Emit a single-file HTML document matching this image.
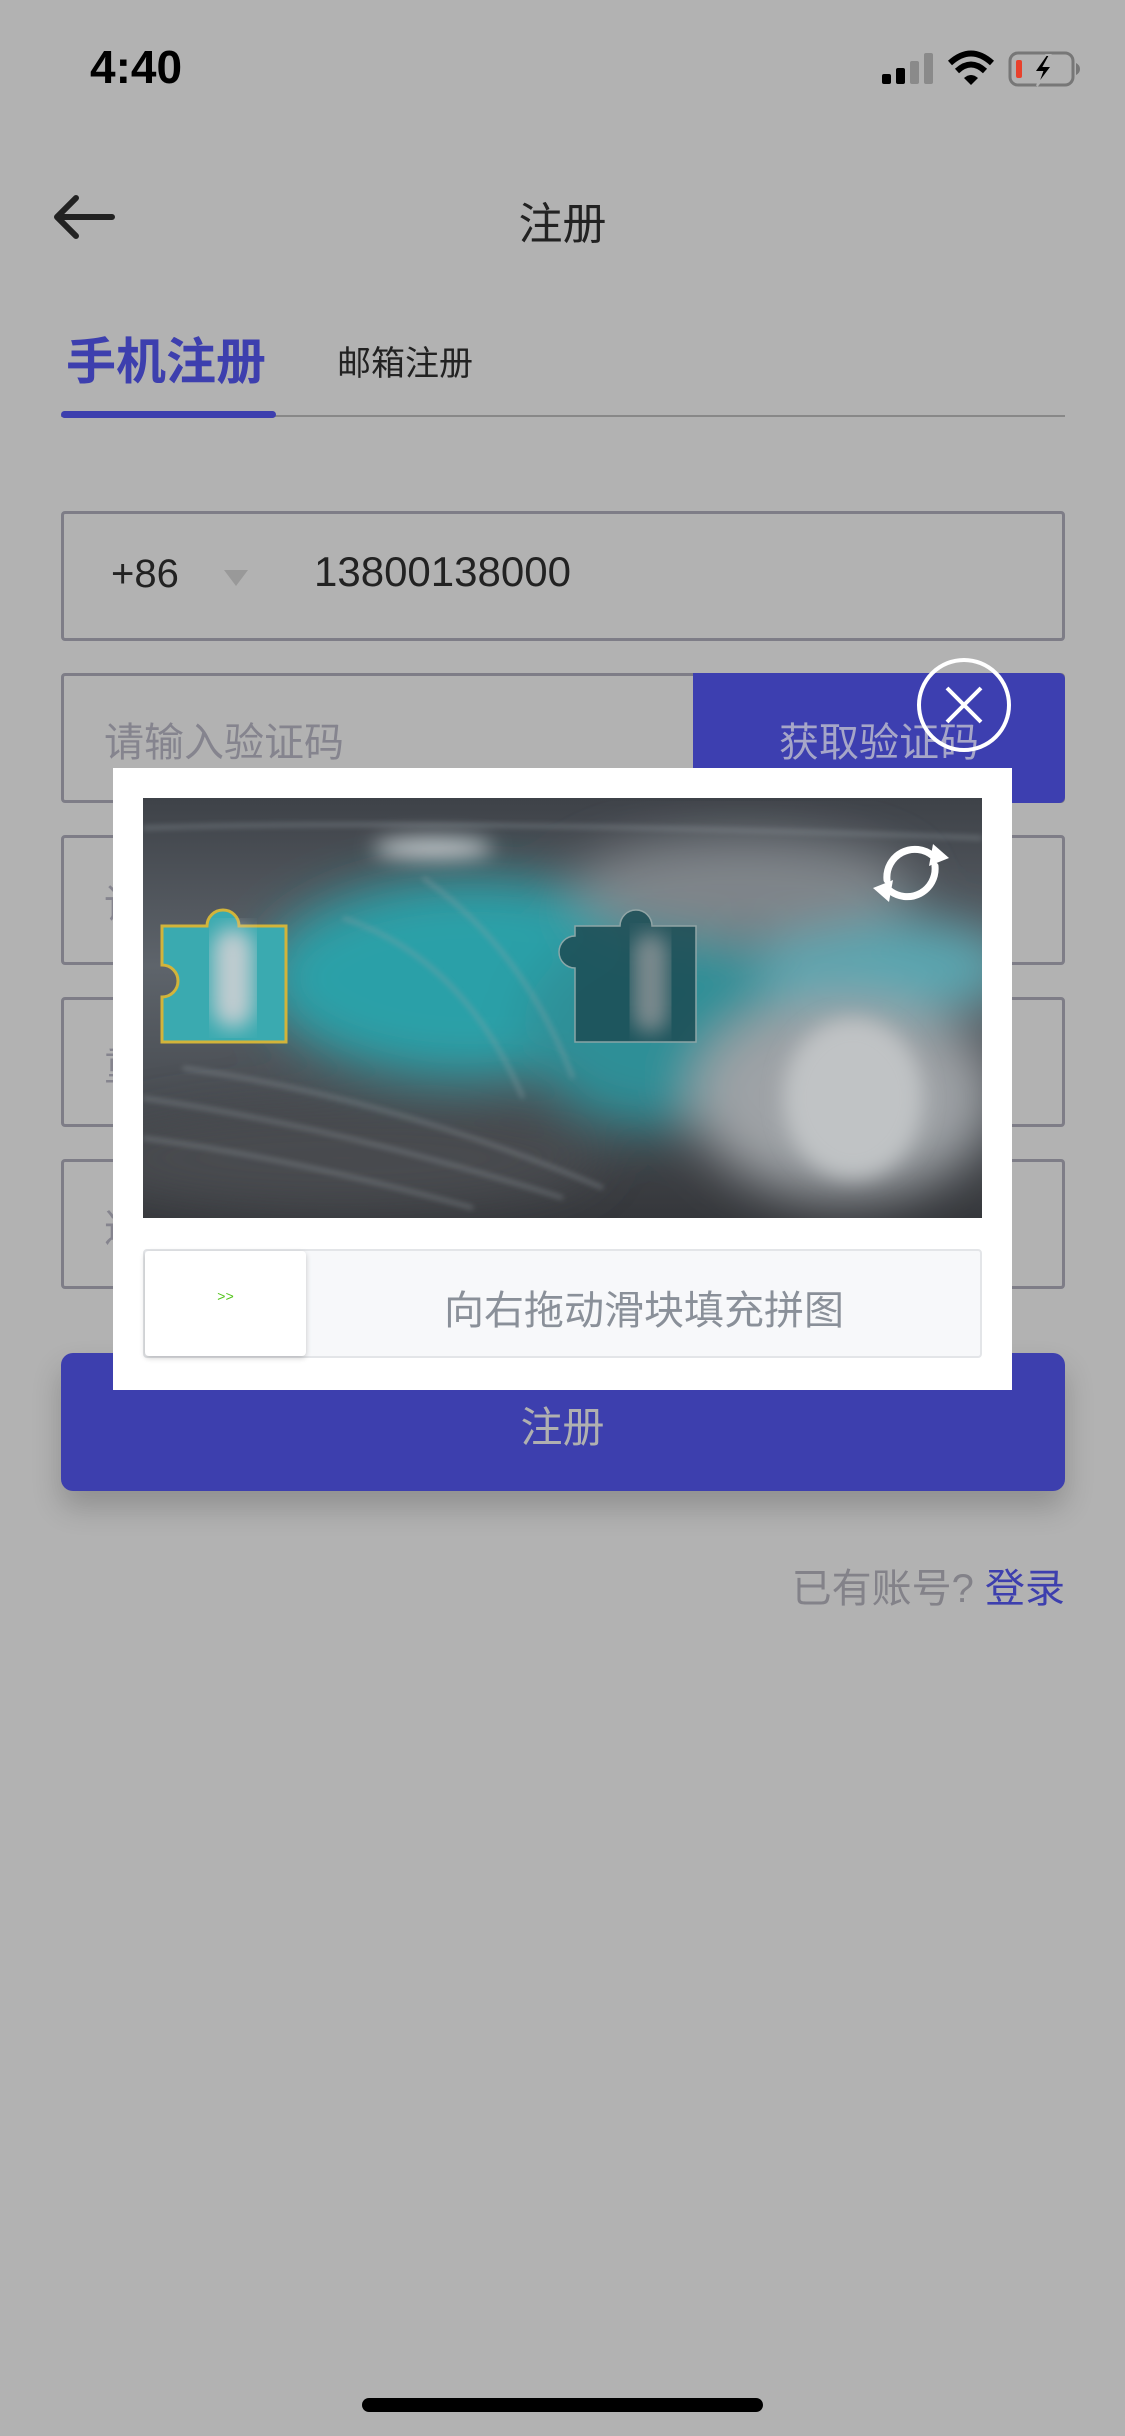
<!DOCTYPE html>
<html><head><meta charset="utf-8">
<style>
*{margin:0;padding:0;box-sizing:border-box}
body{width:1125px;height:2436px;background:#b2b2b2;position:relative;overflow:hidden;font-family:"Liberation Sans","Noto Sans CJK SC",sans-serif}
.abs{position:absolute}
.inp{position:absolute;left:61px;width:1004px;height:130px;border:3px solid #7e7d87;border-radius:4px}
.ph{position:absolute;left:40px;top:34px;font-size:40px;color:#85848e;white-space:nowrap}
</style></head><body>
<div class="abs" style="left:90px;top:40px;font-size:46px;font-weight:600;color:#000">4:40</div>
<svg class="abs" style="left:880px;top:50px" width="200" height="40" viewBox="880 50 200 40">
<rect x="882" y="74" width="9" height="10" rx="2" fill="#000"/>
<rect x="896" y="68" width="9" height="16" rx="2" fill="#000"/>
<rect x="910" y="61" width="9" height="23" rx="2" fill="#8a8a8a"/>
<rect x="924" y="53" width="9" height="31" rx="2" fill="#8a8a8a"/>
<path d="M950 63 Q971 44 992 63" stroke="#000" stroke-width="6" fill="none"/>
<path d="M957 71 Q971 58 985 71" stroke="#000" stroke-width="6" fill="none"/>
<path d="M964 78 L971 85 L978 78 Q971 72 964 78Z" fill="#000"/>
<rect x="1010" y="53" width="63" height="32" rx="8" stroke="#777" stroke-width="3" fill="none"/>
<rect x="1016" y="60" width="6" height="18" rx="2" fill="#e8412c"/>
<path d="M1076 63 v12 q4 -2 4 -6 q0 -4 -4 -6z" fill="#777"/>
<path d="M1046 55 L1034 72 H1042 L1037 86 L1052 66 H1044 L1050 55Z" fill="#000" stroke="#b2b2b2" stroke-width="2"/>
</svg>
<svg class="abs" style="left:50px;top:190px" width="70" height="60"><path d="M62 27 H8 M26 8 L7 27 L26 46" stroke="#222" stroke-width="6" fill="none" stroke-linecap="round" stroke-linejoin="round"/></svg>
<div class="abs" style="left:0;width:1125px;text-align:center;top:188px;font-size:44px;color:#222">注册</div>
<div class="abs" style="left:66px;top:322px;font-size:50px;font-weight:bold;color:#3d3fae">手机注册</div>
<div class="abs" style="left:337px;top:336px;font-size:34px;color:#222">邮箱注册</div>
<div class="abs" style="left:61px;top:415px;width:1004px;height:2px;background:#888"></div>
<div class="abs" style="left:61px;top:411px;width:215px;height:7px;border-radius:4px;background:#3d3fae"></div>

<div class="inp" style="top:511px">
<div class="abs" style="left:47px;top:38px;font-size:40px;color:#222">+86</div>
<div class="abs" style="left:160px;top:56px;width:0;height:0;border-left:12px solid transparent;border-right:12px solid transparent;border-top:16px solid #999"></div>
<div class="abs" style="left:250px;top:34px;font-size:42px;color:#222">13800138000</div>
</div>
<div class="inp" style="top:673px"><div class="ph">请输入验证码</div></div>
<div class="abs" style="left:693px;top:673px;width:372px;height:130px;background:#3d3fb0;border-radius:0 6px 6px 0"></div>
<div class="abs" style="left:693px;top:710px;width:372px;text-align:center;font-size:40px;color:#a6a6c8">获取验证码</div>
<div class="inp" style="top:835px"><div class="ph">请</div></div>
<div class="inp" style="top:997px"><div class="ph">重</div></div>
<div class="inp" style="top:1159px"><div class="ph">邀</div></div>
<div class="abs" style="left:61px;top:1353px;width:1004px;height:138px;background:#3d3fae;border-radius:12px;box-shadow:0 16px 30px rgba(0,0,0,0.2)"></div>
<div class="abs" style="left:0;width:1125px;text-align:center;top:1394px;font-size:42px;color:#b0b0b0">注册</div>
<div class="abs" style="right:60px;top:1556px;font-size:40px;color:#838289">已有账号? <span style="color:#3d3fae">登录</span></div>

<div class="abs" style="left:113px;top:768px;width:899px;height:622px;background:#fff"></div>
<svg class="abs" style="left:143px;top:798px" width="839" height="420" viewBox="0 0 839 420">
<defs>
<filter id="b"><feGaussianBlur stdDeviation="25"/></filter>
<filter id="b2"><feGaussianBlur stdDeviation="10"/></filter>
<filter id="b3"><feGaussianBlur stdDeviation="3"/></filter>
<linearGradient id="bg" x1="0" y1="0" x2="0" y2="1"><stop offset="0" stop-color="#3e4248"/><stop offset="0.4" stop-color="#5e646b"/><stop offset="1" stop-color="#35373b"/></linearGradient>
</defs>
<rect width="839" height="420" fill="url(#bg)"/>
<g filter="url(#b)">
<ellipse cx="330" cy="180" rx="210" ry="100" fill="#2aa0a8"/>
<ellipse cx="520" cy="230" rx="140" ry="100" fill="#2f8f97"/>
<ellipse cx="740" cy="170" rx="130" ry="50" fill="#5aa6b0"/>
<ellipse cx="700" cy="300" rx="150" ry="100" fill="#9ea2a6"/>
<ellipse cx="600" cy="90" rx="170" ry="50" fill="#80858a"/>
<ellipse cx="200" cy="360" rx="260" ry="50" fill="#4a4c50"/>
</g>
<g filter="url(#b3)" stroke="#9aa3a8" stroke-width="3" opacity="0.5" fill="none">
<path d="M0 300 Q200 330 420 400"/><path d="M0 340 Q150 360 330 410"/><path d="M40 270 Q250 300 460 390"/>
<path d="M200 120 Q320 160 380 300"/><path d="M280 80 Q380 150 430 280"/><path d="M0 30 Q300 20 839 40"/>
</g>
<g filter="url(#b2)">
<ellipse cx="290" cy="50" rx="60" ry="10" fill="#c8cdd0"/>
<ellipse cx="710" cy="300" rx="70" ry="80" fill="#c0c3c5"/>
</g>
<path d="M19,128 h45 a16,16 0 1 1 32,0 h47 v116 h-124 v-45 a16,16 0 0 0 0,-32 z" fill="#3aaab0" stroke="#d2b43a" stroke-width="3"/>
<rect x="70" y="130" width="40" height="100" rx="20" fill="#c0ccd0" filter="url(#b2)"/>
<path d="M432,170 a16,16 0 0 1 0,-32 v-10 h45 a16,16 0 1 1 32,0 h44 v116 h-121 z" fill="#1c4d55" opacity="0.85" stroke="#9aa" stroke-width="1.5"/>
<rect x="490" y="135" width="35" height="100" rx="18" fill="#7c8a8e" filter="url(#b2)"/>
<g stroke="#fff" stroke-width="7" fill="none" stroke-linecap="round">
<path d="M744 82 A28 28 0 0 1 790 58"/><path d="M792 68 A28 28 0 0 1 746 92"/>
</g>
<path d="M790 46 L806 60 L786 68Z" fill="#fff"/><path d="M746 104 L730 90 L750 82Z" fill="#fff"/>
</svg>
<div class="abs" style="left:143px;top:1249px;width:839px;height:109px;background:#f7f8fa;border:2px solid #e3e5e8;border-radius:4px"></div>
<div class="abs" style="left:145px;top:1251px;width:161px;height:105px;background:#fff;border-radius:4px;box-shadow:0 2px 6px rgba(0,0,0,0.2)"></div>
<div class="abs" style="left:145px;top:1290px;width:161px;text-align:center;font-size:14px;color:#52c41a;font-family:'Liberation Mono',monospace">&gt;&gt;</div>
<div class="abs" style="left:306px;width:676px;text-align:center;top:1278px;font-size:40px;color:#8a9099">向右拖动滑块填充拼图</div>
<svg class="abs" style="left:914px;top:655px" width="100" height="100"><circle cx="50" cy="50" r="45" stroke="#fff" stroke-width="4" fill="none"/><path d="M33 33 L67 67 M67 33 L33 67" stroke="#fff" stroke-width="4"/></svg>
<div class="abs" style="left:362px;top:2398px;width:401px;height:14px;border-radius:7px;background:#000"></div>
</body></html>
